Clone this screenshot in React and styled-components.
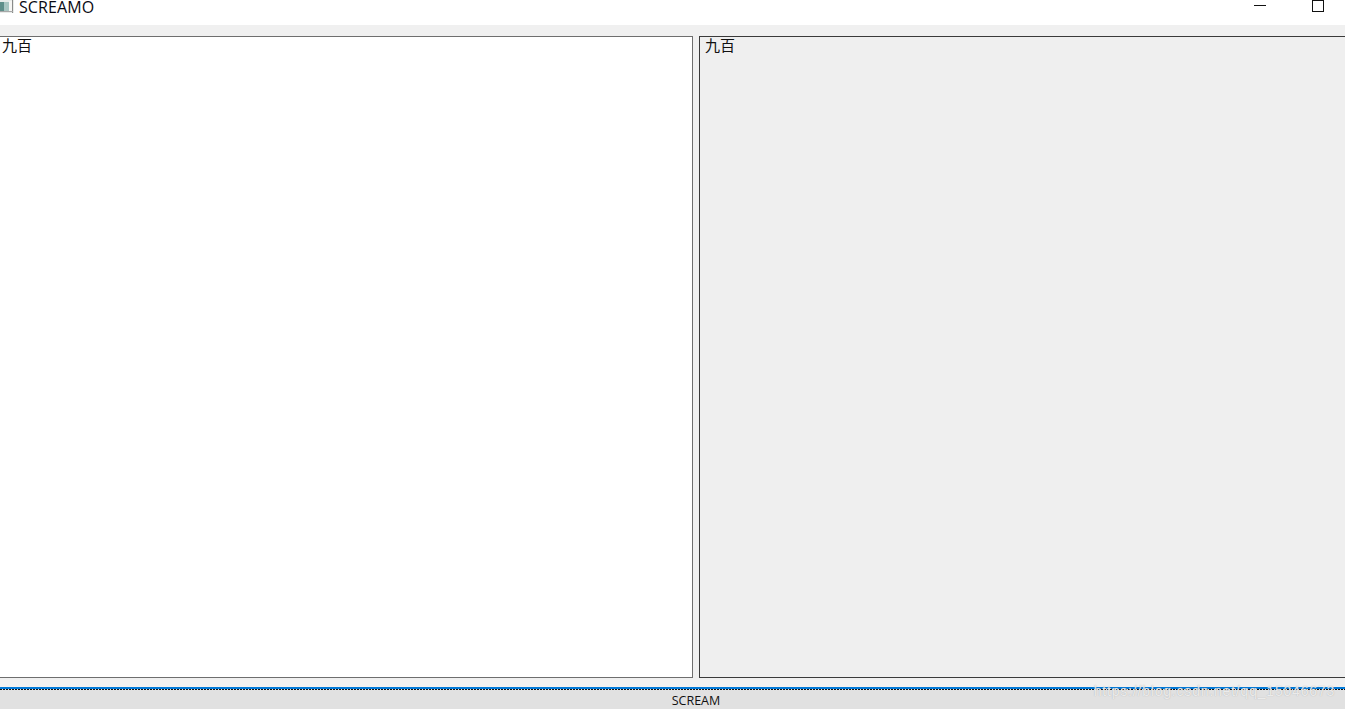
import React from "react";
import styled, { createGlobalStyle } from "styled-components";

const Global = createGlobalStyle`
  html, body { margin: 0; padding: 0; background: #f0f0f0; }
  #root { width: 1345px; height: 709px; overflow: hidden; }
`;

const Window = styled.div`
  position: relative;
  width: 1345px;
  height: 709px;
  display: flex;
  flex-direction: column;
  overflow: hidden;
  background: #f0f0f0;
`;

const TitleBar = styled.header`
  height: 25px;
  flex: none;
  background: #fff;
  display: flex;
  align-items: flex-start;
`;

const AppIcon = styled.svg`
  width: 14px;
  height: 13px;
  flex: none;
  display: block;
`;

const Title = styled.span`
  margin-left: 5px;
  font: 16px/14px "Open Sans", "Liberation Sans", sans-serif;
  letter-spacing: 0.1px;
  color: #0a0a14;
`;

const Controls = styled.div`
  margin-left: auto;
  display: flex;
  align-items: flex-start;
  padding-right: 20px;
  gap: 45px;
`;

const WinButton = styled.svg`
  width: 13px;
  height: 13px;
  display: block;
  flex: none;
`;

const Workspace = styled.main`
  flex: 1;
  min-height: 0;
  display: flex;
  gap: 6px;
  padding: 11px 0 9px;
`;

const Panel = styled.section`
  box-sizing: border-box;
  background: ${(p) => (p.$muted ? "#efefef" : "#fff")};
  border: 1px solid ${(p) => (p.$muted ? "#3a3a3a" : "#6e6e6e")};
  ${(p) => (p.$muted ? "border-right: none; flex: 1;" : "border-left: none; width: 693px; flex: none;")}
  padding: 0 0 0 ${(p) => (p.$muted ? "5px" : "2px")};
  font: 15px/16px "Noto Sans CJK SC", "Noto Sans", sans-serif;
  color: #111;
`;

const StatusBar = styled.footer`
  height: 22px;
  flex: none;
  box-sizing: border-box;
  background: #e1e1e1;
  border-top: 2px solid #0078d7;
  position: relative;
  display: flex;
  align-items: center;
  justify-content: center;
  padding: 3px 0 0 47px;
  font: 12.5px/16px "Open Sans", "Liberation Sans", sans-serif;
  color: #111;
  &::before {
    content: "";
    position: absolute;
    left: 0;
    right: 0;
    top: 0;
    height: 1px;
    background: repeating-linear-gradient(90deg, #111 0 2px, #e1e1e1 2px 3px);
  }
`;

const Watermark = styled.span`
  position: absolute;
  right: 10px;
  bottom: 9px;
  font: 14px/18px "Liberation Sans", sans-serif;
  letter-spacing: 0.8px;
  color: rgba(255, 255, 255, 0.75);
  text-shadow: 0 0 1px rgba(150, 150, 150, 0.8);
`;

export default function App() {
  return (
    <Window>
      <Global />
      <TitleBar>
        <AppIcon viewBox="0 0 14 13">
          <rect x="0" y="0" width="14" height="13" fill="#e8ecea" />
          <rect x="0" y="2" width="4" height="9" fill="#5f8f8a" />
          <rect x="4" y="2" width="5" height="9" fill="#a9c6c2" />
          <rect x="9" y="1" width="3" height="10" fill="#f6f6f4" />
          <rect x="12" y="0" width="1" height="13" fill="#8a8a8a" />
          <rect x="0" y="11" width="13" height="1" fill="#a8a8a8" />
        </AppIcon>
        <Title>SCREAMO</Title>
        <Controls>
          <WinButton viewBox="0 0 13 13">
            <rect x="0" y="5" width="12" height="1" fill="#111" />
          </WinButton>
          <WinButton viewBox="0 0 13 13">
            <rect x="0.5" y="0.5" width="11" height="11" fill="none" stroke="#111" />
          </WinButton>
        </Controls>
      </TitleBar>
      <Workspace>
        <Panel>九百</Panel>
        <Panel $muted>九百</Panel>
      </Workspace>
      <StatusBar>
        SCREAM
      </StatusBar>
      <Watermark>https://blog.csdn.net/qq_15046673</Watermark>
    </Window>
  );
}
